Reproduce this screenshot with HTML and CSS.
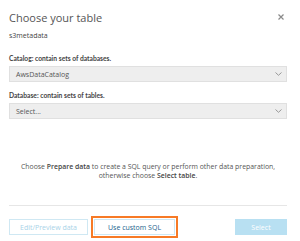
FILE: index.html
```html
<!DOCTYPE html>
<html>
<head>
<meta charset="utf-8">
<link rel="stylesheet" href="styles.css">
</head>
<body>
<div class="dialog">
  <div class="header">
    <h1 class="title">Choose your table</h1>
    <span class="close" aria-label="close">
      <svg width="6" height="6" viewBox="0 0 6 6"><path d="M0.5 0.5 L5.5 5.5 M5.5 0.5 L0.5 5.5" stroke="#8a8a8a" stroke-width="1.2"/></svg>
    </span>
  </div>
  <div class="source">s3metadata</div>
  <div class="field">
    <label class="label">Catalog: contain sets of databases.</label>
    <div class="select"><span>AwsDataCatalog</span><svg class="chev" width="7" height="4" viewBox="0 0 7 4"><path d="M0.5 0.5 L3.5 3.3 L6.5 0.5" fill="none" stroke="#999" stroke-width="1"/></svg></div>
  </div>
  <div class="field">
    <label class="label">Database: contain sets of tables.</label>
    <div class="select"><span>Select...</span><svg class="chev" width="7" height="4" viewBox="0 0 7 4"><path d="M0.5 0.5 L3.5 3.3 L6.5 0.5" fill="none" stroke="#999" stroke-width="1"/></svg></div>
  </div>
  <p class="hint">Choose <b>Prepare data</b> to create a SQL query or perform other data preparation,<br>otherwise choose <b>Select table</b>.</p>
  <div class="footer">
    <button class="btn btn-disabled">Edit/Preview data</button>
    <div class="focus"><button class="btn btn-secondary">Use custom SQL</button></div>
    <span class="spacer"></span>
    <button class="btn btn-primary">Select</button>
  </div>
</div>
</body>
</html>
```
FILE: styles.css
```css
* { box-sizing: border-box; }
html, body { margin: 0; padding: 0; background: #fff; }
body { font-family: "Open Sans", "Liberation Sans", sans-serif; color: #444; width: 300px; height: 241px; overflow: hidden; }
.dialog { padding: 0 13px 0 9px; }
.header { display: flex; justify-content: space-between; align-items: center; height: 32px; padding-top: 2px; }
.title { margin: 0; font-size: 11px; font-weight: 400; color: #555; }
.close { display: flex; margin-right: 3px; margin-top: -1px; }
.source { font-size: 7px; color: #444; margin-top: -1px; height: 22px; }
.label { display: block; font-family: Lato, "Open Sans", sans-serif; font-size: 6.7px; font-weight: 700; color: #444; height: 11px; line-height: 11px; margin-bottom: 2px; }
.select { display: flex; align-items: center; justify-content: space-between; height: 16px; background: #eeeeee; border: 1px solid #e0e0e0; padding: 0 4px 0 6px; font-size: 7px; color: #555; margin-bottom: 8px; }
.hint { text-align: center; font-size: 6.9px; line-height: 9px; color: #555; margin: 43px 0 0 0; height: 43px; }
.hint b { font-weight: 600; color: #444; }
.footer { display: flex; align-items: center; border-top: 1px solid #e6e6e6; padding-top: 10px; }
.btn { font-family: inherit; font-size: 7px; height: 16px; border: 1px solid #cfe8f3; background: #fff; padding: 0; cursor: default; }
.btn-disabled { width: 79px; color: #a9d3e8; }
.focus { margin-left: 3px; border: 2px solid #f77a26; padding: 1px; }
.btn-secondary { width: 81px; color: #1a5f8e; display: block; }
.spacer { flex: 1; }
.btn-primary { width: 52px; background: #b8e0f2; border-color: #b8e0f2; color: #fff; }
```
